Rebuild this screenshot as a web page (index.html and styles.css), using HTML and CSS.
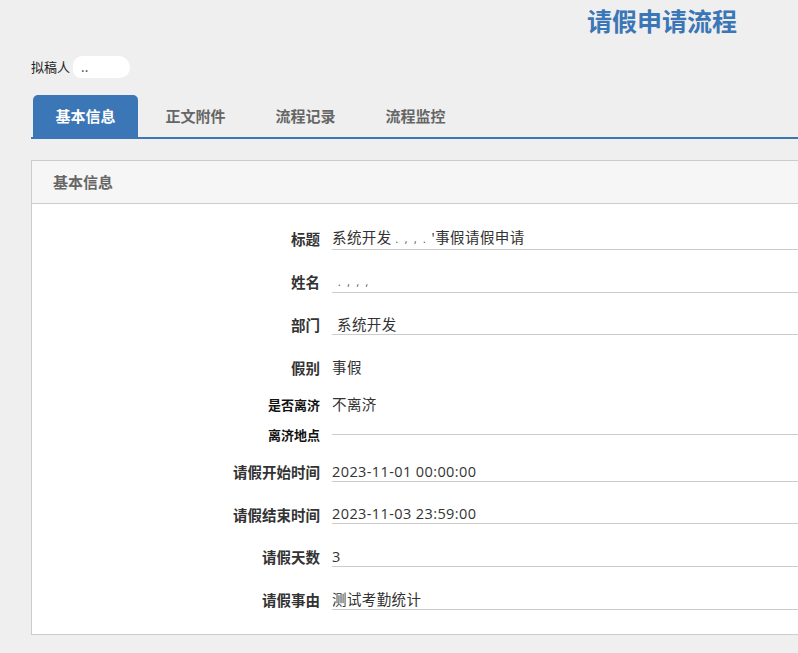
FILE: index.html
```html
<!DOCTYPE html>
<html lang="zh-CN">
<head>
<meta charset="utf-8">
<title>请假申请流程</title>
<link rel="stylesheet" href="styles.css">
</head>
<body>
<div class="page">
  <div class="title-bar"><h1 class="title">请假申请流程</h1></div>
  <div class="drafter">拟稿人<span class="redact-blob">..</span></div>
  <div class="tabs">
    <div class="tab active">基本信息</div>
    <div class="tab">正文附件</div>
    <div class="tab">流程记录</div>
    <div class="tab">流程监控</div>
  </div>
  <div class="panel">
    <div class="panel-head">基本信息</div>
    <div class="panel-body">
      <div class="row">
        <div class="label">标题</div>
        <div class="value line">系统开发<span class="redact">. , , .</span>'事假请假申请</div>
      </div>
      <div class="row">
        <div class="label">姓名</div>
        <div class="value line"><span class="redact short">. , , ,</span></div>
      </div>
      <div class="row">
        <div class="label">部门</div>
        <div class="value line indent">系统开发</div>
      </div>
      <div class="row">
        <div class="label">假别</div>
        <div class="value">事假</div>
      </div>
      <div class="row row-s1">
        <div class="label dark">是否离济</div>
        <div class="value">不离济</div>
      </div>
      <div class="row row-s2">
        <div class="label dark">离济地点</div>
        <div class="value line empty"></div>
      </div>
      <div class="row row-s3">
        <div class="label">请假开始时间</div>
        <div class="value line">2023-11-01 00:00:00</div>
      </div>
      <div class="row row-s4">
        <div class="label">请假结束时间</div>
        <div class="value line">2023-11-03 23:59:00</div>
      </div>
      <div class="row row-s3">
        <div class="label">请假天数</div>
        <div class="value line">3</div>
      </div>
      <div class="row row-s5">
        <div class="label">请假事由</div>
        <div class="value line">测试考勤统计</div>
      </div>
    </div>
  </div>
</div>
</body>
</html>
```

FILE: styles.css
```css
html, body {
  margin: 0;
  padding: 0;
  overflow: hidden;
}
body {
  background: #efefef;
  font-family: "Noto Sans CJK SC", "Noto Sans", "Liberation Sans", sans-serif;
  color: #333;
  width: 798px;
  height: 653px;
}
.page {
  display: flex;
  flex-direction: column;
}
.title-bar {
  display: flex;
  justify-content: flex-end;
  padding: 8px 61px 0 0;
}
.title {
  margin: 0;
  font-size: 25px;
  line-height: 25px;
  font-weight: bold;
  color: #3b76b6;
}
.drafter {
  margin-top: 23px;
  padding-left: 31px;
  font-size: 13px;
  line-height: 22px;
  color: #222;
  display: flex;
  align-items: center;
}
.redact-blob {
  display: inline-block;
  width: 57px;
  height: 22px;
  margin-left: 3px;
  background: #fff;
  border-radius: 11px 14px 12px 9px;
  font-size: 13px;
  line-height: 22px;
  color: #333;
  padding-left: 8px;
  box-sizing: border-box;
}
.tabs {
  display: flex;
  margin: 17px 0 0 31px;
  padding-left: 2px;
  border-bottom: 2px solid #3b76b6;
}
.tab {
  width: 105px;
  height: 42px;
  line-height: 42px;
  margin-right: 5px;
  text-align: center;
  font-size: 15px;
  font-weight: bold;
  color: #666;
  border-radius: 5px 5px 0 0;
}
.tab.active {
  background: #3b76b6;
  color: #fff;
}
.panel {
  margin: 21px -4px 0 31px;
  border: 1px solid #cccccc;
  background: #fff;
}
.panel-head {
  height: 42px;
  line-height: 42px;
  padding-left: 21px;
  background: #f6f6f6;
  border-bottom: 1px solid #cccccc;
  font-size: 15px;
  font-weight: bold;
  color: #666;
}
.panel-body {
  padding: 13px 0 14px 0;
}
.row {
  display: flex;
  align-items: center;
  height: 43px;
}
.row-s1 { height: 31px; }
.row-s2 { height: 29px; }
.row-s3 { height: 45px; }
.row-s4 { height: 40px; }
.row-s5 { height: 41px; }
.label {
  flex: 0 0 300px;
  box-sizing: border-box;
  padding-right: 12px;
  text-align: right;
  font-size: 14.5px;
  font-weight: bold;
  color: #333;
  line-height: 19px;
}
.label.dark {
  font-size: 13px;
  color: #111;
}
.value {
  flex: 1;
  font-family: "Open Sans", "Noto Sans CJK SC", sans-serif;
  font-size: 14.5px;
  letter-spacing: 0.4px;
  line-height: 19px;
  color: #333;
  white-space: nowrap;
}
.value.line {
  border-bottom: 1px solid #cccccc;
}
.value.empty {
  height: 0;
}
.value.indent {
  padding-left: 5px;
}
.redact {
  display: inline-block;
  width: 40px;
  font-size: 10px;
  color: #444;
  letter-spacing: 2px;
  text-align: center;
}
.redact.short {
  width: 40px;
  text-align: left;
  padding-left: 6px;
}
```
